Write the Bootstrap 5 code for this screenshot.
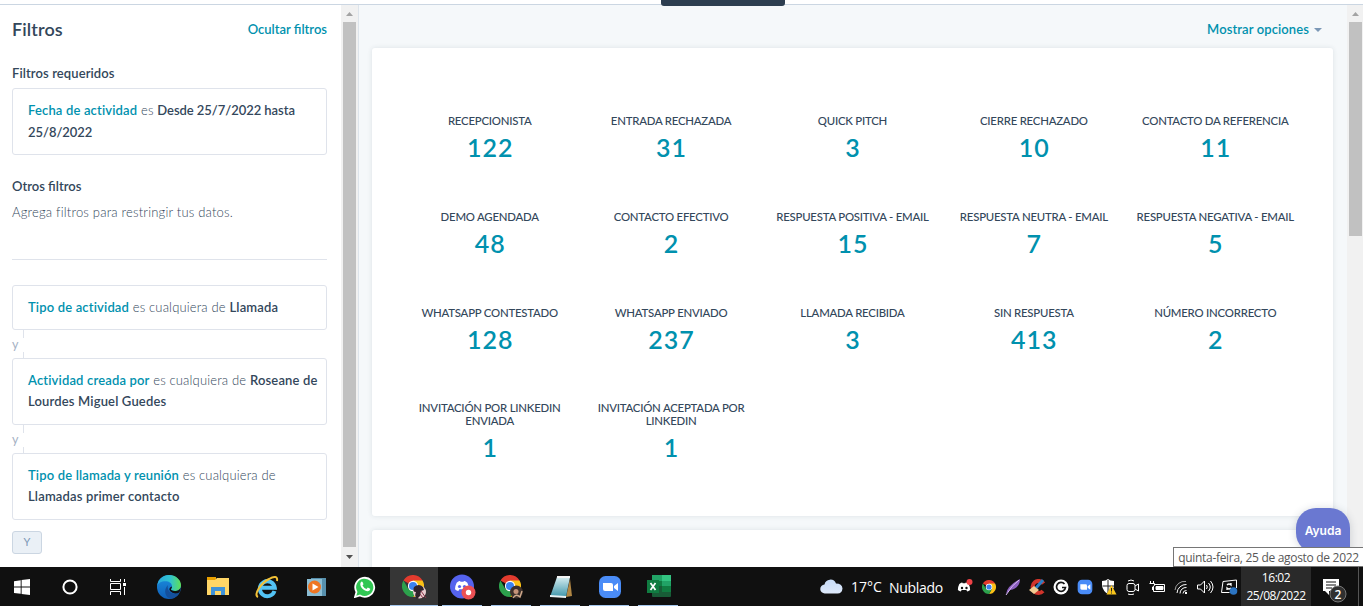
<!DOCTYPE html>
<html lang="es">
<head>
<meta charset="utf-8">
<meta name="viewport" content="width=device-width, initial-scale=1">
<title>Panel de actividad</title>
<link href="https://cdn.jsdelivr.net/npm/bootstrap@5.3.0/dist/css/bootstrap.min.css" rel="stylesheet">
<style>
:root{--ink:#33475b;--teal:#0091ae;--line:#dfe3eb}
body{height:606px;font-family:Lato,"Liberation Sans",sans-serif;font-size:13px;color:var(--ink);background:#fff;line-height:21.5px}
.topline{height:5px;border-bottom:1px solid #cbd6e2}
.topline span{top:0;left:661px;width:124px;height:6px;background:#2d3e50;border-radius:0 0 3px 3px}
.filters{width:341px;padding:0 14px 0 12px;font-weight:300}
.filters b,.teal{font-weight:600}
.teal{color:var(--teal)}
.filters h1{font-size:18px;font-weight:600;letter-spacing:.1px}
.filters-head{height:50px}
.fbox{border:1px solid var(--line);border-radius:3px;padding:11px 0 11px 15px;white-space:nowrap;letter-spacing:.16px}
.fbox.single{padding-bottom:10.5px}
.fbox .dates{letter-spacing:-.05px}
.joiner{height:28px;color:#a5b1c4;font-size:12.5px;font-weight:400;padding-top:3px}
.joiner::before,.joiner::after{content:"";position:absolute;left:11px;width:1px;background:var(--line)}
.joiner::before{top:0;height:8px}
.joiner::after{bottom:0;height:6px}
.ybtn{width:30px;height:23px;border:1px solid #cbd6e2;border-radius:3px;background:#eaf0f6;color:#7c98b6;font-size:11px;font-weight:400}
.vscroll{width:17px;background:#f1f1f1}
.vscroll .arrow{height:17px}
.vscroll .thumb{width:13px;background:#c1c1c1}
.board{min-width:0;background:#f5f8fa;border-left:1px solid #dde4eb}
.board-head{height:43px;padding-right:25px}
.tile{background:#fff;border-radius:3px;box-shadow:0 0 5px rgba(45,62,80,.12);margin:0 14px 14px 13px}
.kpis{height:468px;padding:66px 27px 0}
.kpis .col{height:95.8px;line-height:13px;font-size:11.4px;font-weight:500;letter-spacing:-.22px;padding:0 8px;text-align:center}
.kpis strong{display:block;font-size:25px;font-weight:600;line-height:28px;letter-spacing:1px;padding-left:1px;color:var(--teal);margin-top:6px}
.help{right:13px;top:508px;width:54px;height:45px;background:#6a78d1;color:#fff;border-radius:20px 20px 4px 20px;font:600 12px Inter,sans-serif;box-shadow:0 1px 8px rgba(45,62,80,.2)}
.tip{right:0;top:547px;width:190px;height:20px;border:1px solid #767676;border-right:0;background:#fff;color:#575757;font:12px "Open Sans","Noto Sans",sans-serif;letter-spacing:-.3px;z-index:2}
.taskbar{height:39px;background:#101010;color:#fff;font-family:"Open Sans","Noto Sans",sans-serif}
.app{width:49px;height:39px;position:relative;flex:none}
.app.open::after{content:"";position:absolute;bottom:0;left:4px;right:5px;height:1px;background:#a6c8ee}
.app.active{background:#363636}
.app.active::after{left:0;right:0}
.tray{width:24px}
.clock{width:70px;background:#2a2a2a;font-size:12px;line-height:18px;letter-spacing:-.45px}
.notif{width:48px;border-right:1px solid #555}
</style>
</head>
<body class="d-flex flex-column overflow-hidden position-relative">
<svg width="0" height="0" class="position-absolute">
<defs>
<symbol id="chrome" viewBox="0 0 24 24"><path fill="#e33b2e" d="M12 12 1.600 6A12 12 0 0 1 22.400 6z"/><path fill="#fbc116" d="M12 12V6h10.400A12 12 0 0 1 12 24l5.200-9z"/><path fill="#2ca14c" d="M12 24A12 12 0 0 1 1.600 6l5.200 9L12 17.500l5-2z"/><circle cx="12" cy="12" r="5.600" fill="#fff"/><circle cx="12" cy="12" r="4.400" fill="#3b82f0"/></symbol>
<symbol id="discord" viewBox="0 0 24 24"><path d="M4 7q3-3 5-2.600l.8 1.300h4.400l.8-1.300q2-.4 5 2.600 3 6 2.500 10-2.500 2.500-5 2.500L16 17H8l-1.500 2.500q-2.500 0-5-2.500Q1 13 4 7z" fill="#fff"/></symbol>
<symbol id="zoomcam" viewBox="0 0 24 24"><rect x="1" y="1" width="22" height="22" rx="6.500" fill="#4a8cf7"/><path fill="#fff" d="M5 8h8q2 0 2 2v6H7q-2 0-2-2zm11 3 4-3v8l-4-3z"/></symbol>
</defs>
</svg>

<header class="topline flex-shrink-0"><span class="position-absolute"></span></header>

<div class="d-flex flex-grow-1 overflow-hidden">
  <aside class="filters flex-shrink-0">
    <div class="filters-head d-flex justify-content-between align-items-center">
      <h1 class="m-0">Filtros</h1><span class="teal">Ocultar filtros</span>
    </div>
    <div style="margin-top:8px;letter-spacing:.1px"><b>Filtros requeridos</b></div>
    <div class="fbox" style="margin-top:3.500px"><span class="teal">Fecha de actividad</span> es <b class="dates">Desde 25/7/2022 hasta<br>25/8/2022</b></div>
    <div style="margin-top:21px"><b>Otros filtros</b></div>
    <div style="margin-top:4.500px;letter-spacing:.2px">Agrega filtros para restringir tus datos.</div>
    <hr class="opacity-100" style="margin:35px 0 25px;border-color:#dfe3eb">
    <div class="fbox single"><span class="teal">Tipo de actividad</span> es cualquiera de <b>Llamada</b></div>
    <div class="joiner position-relative d-flex align-items-center">y</div>
    <div class="fbox"><span class="teal">Actividad creada por</span> es cualquiera de <b>Roseane de<br>Lourdes Miguel Guedes</b></div>
    <div class="joiner position-relative d-flex align-items-center">y</div>
    <div class="fbox"><span class="teal">Tipo de llamada y reunión</span> es cualquiera de<br><b>Llamadas primer contacto</b></div>
    <div class="ybtn d-flex align-items-center justify-content-center" style="margin-top:11px">Y</div>
  </aside>
  <div class="vscroll flex-shrink-0 d-flex flex-column align-items-center">
    <div class="arrow d-flex align-items-center"><svg width="7" height="4"><path d="M0 4 3.500 0 7 4z" fill="#a3a3a3"/></svg></div>
    <div class="thumb flex-grow-1"></div>
    <div class="arrow d-flex align-items-center" style="height:20px"><svg width="7" height="4"><path d="M0 0 3.500 4 7 0z" fill="#505050"/></svg></div>
  </div>
  <main class="board flex-grow-1">
    <div class="board-head d-flex justify-content-end align-items-center" style="padding-top:7px">
      <span class="teal" style="letter-spacing:.1px">Mostrar opciones</span>
      <svg width="8" height="4" style="margin-left:5px"><path d="M0 0h8L4 4z" fill="#7c98b6"/></svg>
    </div>
    <section class="tile kpis">
      <div class="row row-cols-5 g-0">
        <div class="col">RECEPCIONISTA<strong>122</strong></div>
        <div class="col">ENTRADA RECHAZADA<strong>31</strong></div>
        <div class="col">QUICK PITCH<strong>3</strong></div>
        <div class="col">CIERRE RECHAZADO<strong>10</strong></div>
        <div class="col">CONTACTO DA REFERENCIA<strong>11</strong></div>
        <div class="col">DEMO AGENDADA<strong>48</strong></div>
        <div class="col">CONTACTO EFECTIVO<strong>2</strong></div>
        <div class="col">RESPUESTA POSITIVA - EMAIL<strong>15</strong></div>
        <div class="col">RESPUESTA NEUTRA - EMAIL<strong>7</strong></div>
        <div class="col">RESPUESTA NEGATIVA - EMAIL<strong>5</strong></div>
        <div class="col">WHATSAPP CONTESTADO<strong>128</strong></div>
        <div class="col">WHATSAPP ENVIADO<strong>237</strong></div>
        <div class="col">LLAMADA RECIBIDA<strong>3</strong></div>
        <div class="col">SIN RESPUESTA<strong>413</strong></div>
        <div class="col">NÚMERO INCORRECTO<strong>2</strong></div>
        <div class="col">INVITACIÓN POR LINKEDIN<br>ENVIADA<strong>1</strong></div>
        <div class="col">INVITACIÓN ACEPTADA POR<br>LINKEDIN<strong>1</strong></div>
      </div>
    </section>
    <section class="tile" style="height:80px"></section>
  </main>
  <div class="vscroll flex-shrink-0 d-flex flex-column align-items-center" style="width:16px">
    <div class="arrow d-flex align-items-center"><svg width="7" height="4"><path d="M0 4 3.500 0 7 4z" fill="#a3a3a3"/></svg></div>
    <div class="thumb" style="height:214px"></div>
  </div>
</div>

<div class="help position-absolute d-flex align-items-center justify-content-center">Ayuda</div>
<div class="tip position-absolute d-flex align-items-center justify-content-center text-nowrap">quinta-feira, 25 de agosto de 2022</div>

<footer class="taskbar d-flex flex-shrink-0">
  <div class="app d-flex align-items-center justify-content-center" style="width:44px"><svg width="16" height="16" fill="#fff"><path d="M0 2.200 6.700 1.200V7.500H0zM7.600 1.100 16 0v7.500H7.600zM0 8.500h6.700v6.300L0 13.900zM7.600 8.500H16V16l-8.400-1.100z"/></svg></div>
  <div class="app d-flex align-items-center justify-content-center" style="width:52px"><svg width="16" height="16"><circle cx="8" cy="8" r="6.600" fill="none" stroke="#fff" stroke-width="2"/></svg></div>
  <div class="app d-flex align-items-center justify-content-center" style="width:44px;margin-right:4.500px"><svg width="16" height="16" fill="none" stroke="#fff"><path d="M.5 0v2.500h10V0M.5 4.500h10v6H.5zM.5 16v-3.500h10V16M14.500 0v3M14.500 8v8"/><path fill="#fff" stroke="none" d="M13 4h3v3h-3z"/></svg></div>
  <div class="app d-flex align-items-center justify-content-center"><svg width="24" height="24" viewBox="0 0 24 24">
    <defs><linearGradient id="eg"><stop offset="0" stop-color="#2aa7dd"/><stop offset=".55" stop-color="#30c3cf"/><stop offset="1" stop-color="#5fe054"/></linearGradient><linearGradient id="eb" x2="0" y2="1"><stop offset="0" stop-color="#1b8fe0"/><stop offset="1" stop-color="#0f5fb8"/></linearGradient></defs>
    <circle cx="12" cy="12" r="12" fill="url(#eb)"/><path fill="#14509c" d="M22.500 17.500A12 12 0 0 1 14 23.800c-6-1-8-9-3-13.800-1 4 1 7 4 8q4 1.500 7.500-.5z"/><path fill="url(#eg)" d="M.2 11C1 4 6 0 12 0c7 0 12 5 12 10 0 4-3 6-6 6-2 0-4-.8-4-1.700s1-1 1-3c0-3-3-5-6.500-5C4 6.300 1 8 .2 11z"/><path fill="#101010" d="M15 11.500q0 1.800-1 2.500-.5 1.500 4 2 3.500.2 6-3.500l-1.500 5q-6 2.500-9.500-1.500-2-3 2-4.500z"/></svg></div>
  <div class="app d-flex align-items-center justify-content-center"><svg width="22" height="19"><path fill="#e9a000" d="M0 0h9v5H0z"/><path fill="#ffd667" d="M0 3h8l2-2h12v17H0z"/><path fill="#3f92d8" d="M4 10h14v8h-4v-4H8v4H4z"/></svg></div>
  <div class="app d-flex align-items-center justify-content-center"><svg width="24" height="24" viewBox="0 0 24 24"><path d="M19.500 16A7.500 7.500 0 1 1 19.800 12.700H6" fill="none" stroke="#53c3f4" stroke-width="4"/><path d="M3 22C-2 20 6 8 14 4c5-3 9-3 8 2" fill="none" stroke="#f3c136" stroke-width="2"/></svg></div>
  <div class="app d-flex align-items-center justify-content-center"><svg width="21" height="20"><path d="M5 1h15v18H5z" fill="#5790ad"/><path d="M1 2h15v17H1z" fill="#8bbdd4"/><circle cx="8.500" cy="10" r="6.500" fill="#ee7624"/><path d="m6.500 6.500 6 3.500-6 3.500z" fill="#fff"/></svg></div>
  <div class="app d-flex align-items-center justify-content-center"><svg width="22" height="22" viewBox="0 0 22 22"><path d="m1 21 1.500-5A9.500 9.500 0 1 1 6 19.500z" fill="#31c653" stroke="#fff" stroke-width="1.800"/><path d="M7 6q1-1 1.700.2l.8 2-1 1.300q1.400 2.700 4 3.500l1.300-1.400 2.400 1.200c.4 1.700-1.700 2.700-3 2.500C9 14.500 4.500 9.500 7 6z" fill="#fff"/></svg></div>
  <div class="app open active d-flex align-items-center justify-content-center" style="width:48px;margin-left:.5px"><svg width="25" height="25"><use href="#chrome" width="22" height="22" y="1"/><circle cx="17.500" cy="18" r="6.500" fill="#e9ced0"/><path d="M12 13q5-4 9 0l1 3-3 1-1 5-3 3q-3-3-1-7-4 0-2-5z" fill="#30232b"/><path d="m19 17 5 7M18 20l3 4" stroke="#8a3548"/></svg></div>
  <div class="app open d-flex align-items-center justify-content-center"><svg width="26" height="26"><circle cx="12" cy="12.500" r="12" fill="#5563ee"/><use href="#discord" x="4" y="4" width="16" height="16"/><circle cx="9.500" cy="12.500" r="1.600" fill="#5563ee"/><circle cx="14.500" cy="12.500" r="1.600" fill="#5563ee"/><circle cx="18.500" cy="18.500" r="7" fill="#eb5054"/><circle cx="18.500" cy="18.500" r="2.700" fill="#fff"/></svg></div>
  <div class="app open d-flex align-items-center justify-content-center"><svg width="25" height="25"><use href="#chrome" width="22" height="22" y="1"/><circle cx="17.500" cy="18" r="6.500" fill="#3c302b"/><circle cx="17" cy="17.500" r="2.500" fill="#c59378"/><path d="M14 24q3-5 7-1l2-6" stroke="#d0aa8c" fill="none" stroke-width="1.400"/></svg></div>
  <div class="app open d-flex align-items-center justify-content-center"><svg width="24" height="24"><defs><linearGradient id="np" x2="0" y2="1"><stop offset="0" stop-color="#d6edf0"/><stop offset="1" stop-color="#3d95aa"/></linearGradient></defs><path d="m21 4 2 17-6 1z" fill="#b18744"/><path d="M8 2h13l-4 20H1z" fill="url(#np)"/><path d="m1 20 16 1v2L1 22z" fill="#e9f2f4"/><path d="M8 2h13" stroke="#f5f5f5" stroke-width="2"/></svg></div>
  <div class="app open d-flex align-items-center justify-content-center"><svg width="24" height="24"><use href="#zoomcam" width="24" height="24"/></svg></div>
  <div class="app open d-flex align-items-center justify-content-center"><svg width="24" height="23"><rect x="5" width="19" height="22" rx="1" fill="#185c37"/><path d="M5 0h10v6H5z" fill="#21a366"/><path d="M15 0h9v6h-9z" fill="#33c481"/><path d="M5 6h10v5H5z" fill="#107c41"/><path d="M15 6h9v5h-9z" fill="#21a366"/><path d="M15 11h9v6h-9z" fill="#107c41"/><rect y="5" width="12" height="13" fill="#107c41"/><path d="m3.500 8 5 7m0-7-5 7" stroke="#fff" stroke-width="1.700"/></svg></div>

  <div class="ms-auto d-flex align-items-center" style="font-size:14px">
    <svg width="23" height="15" viewBox="0 0 23 15"><defs><linearGradient id="cl" x2="0" y2="1"><stop offset="0" stop-color="#c8dcf8"/><stop offset="1" stop-color="#dde8f9"/></linearGradient></defs><path d="M5 14.500a4.500 4.500 0 0 1-.5-9A6 6 0 0 1 16 4.500q6 0 6.500 5-.5 5-5 5z" fill="url(#cl)"/></svg>
    <span class="text-nowrap" style="width:38px;margin-left:8px">17°C</span>
    <span style="width:64px;letter-spacing:-.3px;padding-top:2px">Nublado</span>
  </div>
  <div class="tray d-flex align-items-center justify-content-center"><svg width="16" height="16"><use href="#discord" y="1" width="14" height="14"/><circle cx="5" cy="9" r="1.200" fill="#111"/><circle cx="9.500" cy="9" r="1.200" fill="#111"/><circle cx="12.500" cy="3" r="3" fill="#ef4247"/></svg></div>
  <div class="tray d-flex align-items-center justify-content-center"><svg width="14" height="14"><use href="#chrome" width="14" height="14"/></svg></div>
  <div class="tray d-flex align-items-center justify-content-center"><svg width="16" height="16"><path d="M1 15Q2 7 15 0q0 9-10 11z" fill="#8b5fc0"/><path d="M1 16Q7 6 14 1" stroke="#d9bdf1" fill="none"/></svg></div>
  <div class="tray d-flex align-items-center justify-content-center"><svg width="16" height="16"><path d="M14.500 4.500A6 6 0 1 0 14 12" fill="none" stroke="#d1342b" stroke-width="4"/><path d="m14 1-7 8" stroke="#2d7fc5" stroke-width="3"/><path d="m5 7 5 4-5 4-5-4z" fill="#f0cc92"/></svg></div>
  <div class="tray d-flex align-items-center justify-content-center"><svg width="16" height="16"><circle cx="8" cy="8" r="7.500" fill="#fff"/><path d="M11.500 5A4.500 4.500 0 1 0 12.500 8.500H9" fill="none" stroke="#151515" stroke-width="1.700"/></svg></div>
  <div class="tray d-flex align-items-center justify-content-center"><svg width="16" height="16"><use href="#zoomcam" width="16" height="16"/></svg></div>
  <div class="tray d-flex align-items-center justify-content-center"><svg width="16" height="16"><path d="M1 2q4 0 6-2 2 2 6 2v5q-1 5-6 8-5-3-6-8z" fill="#fff"/><path d="M7.500 0v7H13q-1 5-6 8" fill="#ddd"/><path d="M7 1v13M1.500 7H13" stroke="#222"/><path d="m10.500 6 5 9.500h-10z" fill="#f8c51c"/><path d="M10.500 9v3.500m0 1v1" stroke="#222"/></svg></div>
  <div class="tray d-flex align-items-center justify-content-center"><svg width="14" height="16" fill="none" stroke="#fff"><rect x="1" y="4.500" width="8" height="8" rx="2"/><path d="m9 7 3.500-2v7L9 10M2 2q3-2 6 0M2 15q3 1.500 6 0"/></svg></div>
  <div class="tray d-flex align-items-center justify-content-center"><svg width="17" height="12" fill="none" stroke="#fff"><path d="M4.500 3.500h11v7h-11z"/><path fill="#fff" d="M7 5.500h7v3H7z"/><path d="M1.500 0v2m3-2v2M.5 2.500h5v2l-2 1.500v3" fill="#101010"/></svg></div>
  <div class="tray d-flex align-items-center justify-content-center"><svg width="14" height="14" fill="none" stroke="#fff"><path d="M1 10A9.500 9.500 0 0 1 12 1.500" opacity=".6"/><path d="M3 13A9 9 0 0 1 12.500 4.500M6 13.500A6 6 0 0 1 12.500 7.500M9 13.500q0-3 3.500-3"/><path d="M11 12h2v2h-2z" fill="#fff" stroke="none"/></svg></div>
  <div class="tray d-flex align-items-center justify-content-center"><svg width="17" height="14" fill="none" stroke="#fff"><path d="M.5 5h3l4-4v12l-4-4h-3zM9.500 5q1.500 2 0 4M11.500 3q3.500 4 0 8M13.500 1q5 6 0 12"/></svg></div>
  <div class="tray d-flex align-items-center justify-content-center"><svg width="17" height="16" fill="none" stroke="#fff"><path d="M2 2.500 15.500 1v8M2 2.500.5 13.500h8"/><path d="M6 6q2-2 4 0V4m0 5q-2 2-4 0v2" stroke-width="1.300"/><circle cx="12.500" cy="12" r="3.800" fill="#2c75c3" stroke="none"/></svg></div>
  <div class="clock d-flex flex-column align-items-center justify-content-center"><span>16:02</span><span>25/08/2022</span></div>
  <div class="notif"><svg width="48" height="39"><path d="M12 12h16v12H18v4l-4-4h-2z" fill="#fff"/><path d="M15 15h10m-10 3h10m-10 3h6" stroke="#111"/><circle cx="27" cy="27" r="8" fill="#303030" stroke="#777"/><text x="27" y="31.500" text-anchor="middle" font-size="12" font-weight="600" fill="#fff">2</text></svg></div>
  <div style="width:4px"></div>
</footer>
<script src="https://cdn.jsdelivr.net/npm/bootstrap@5.3.0/dist/js/bootstrap.bundle.min.js"></script>
</body>
</html>
